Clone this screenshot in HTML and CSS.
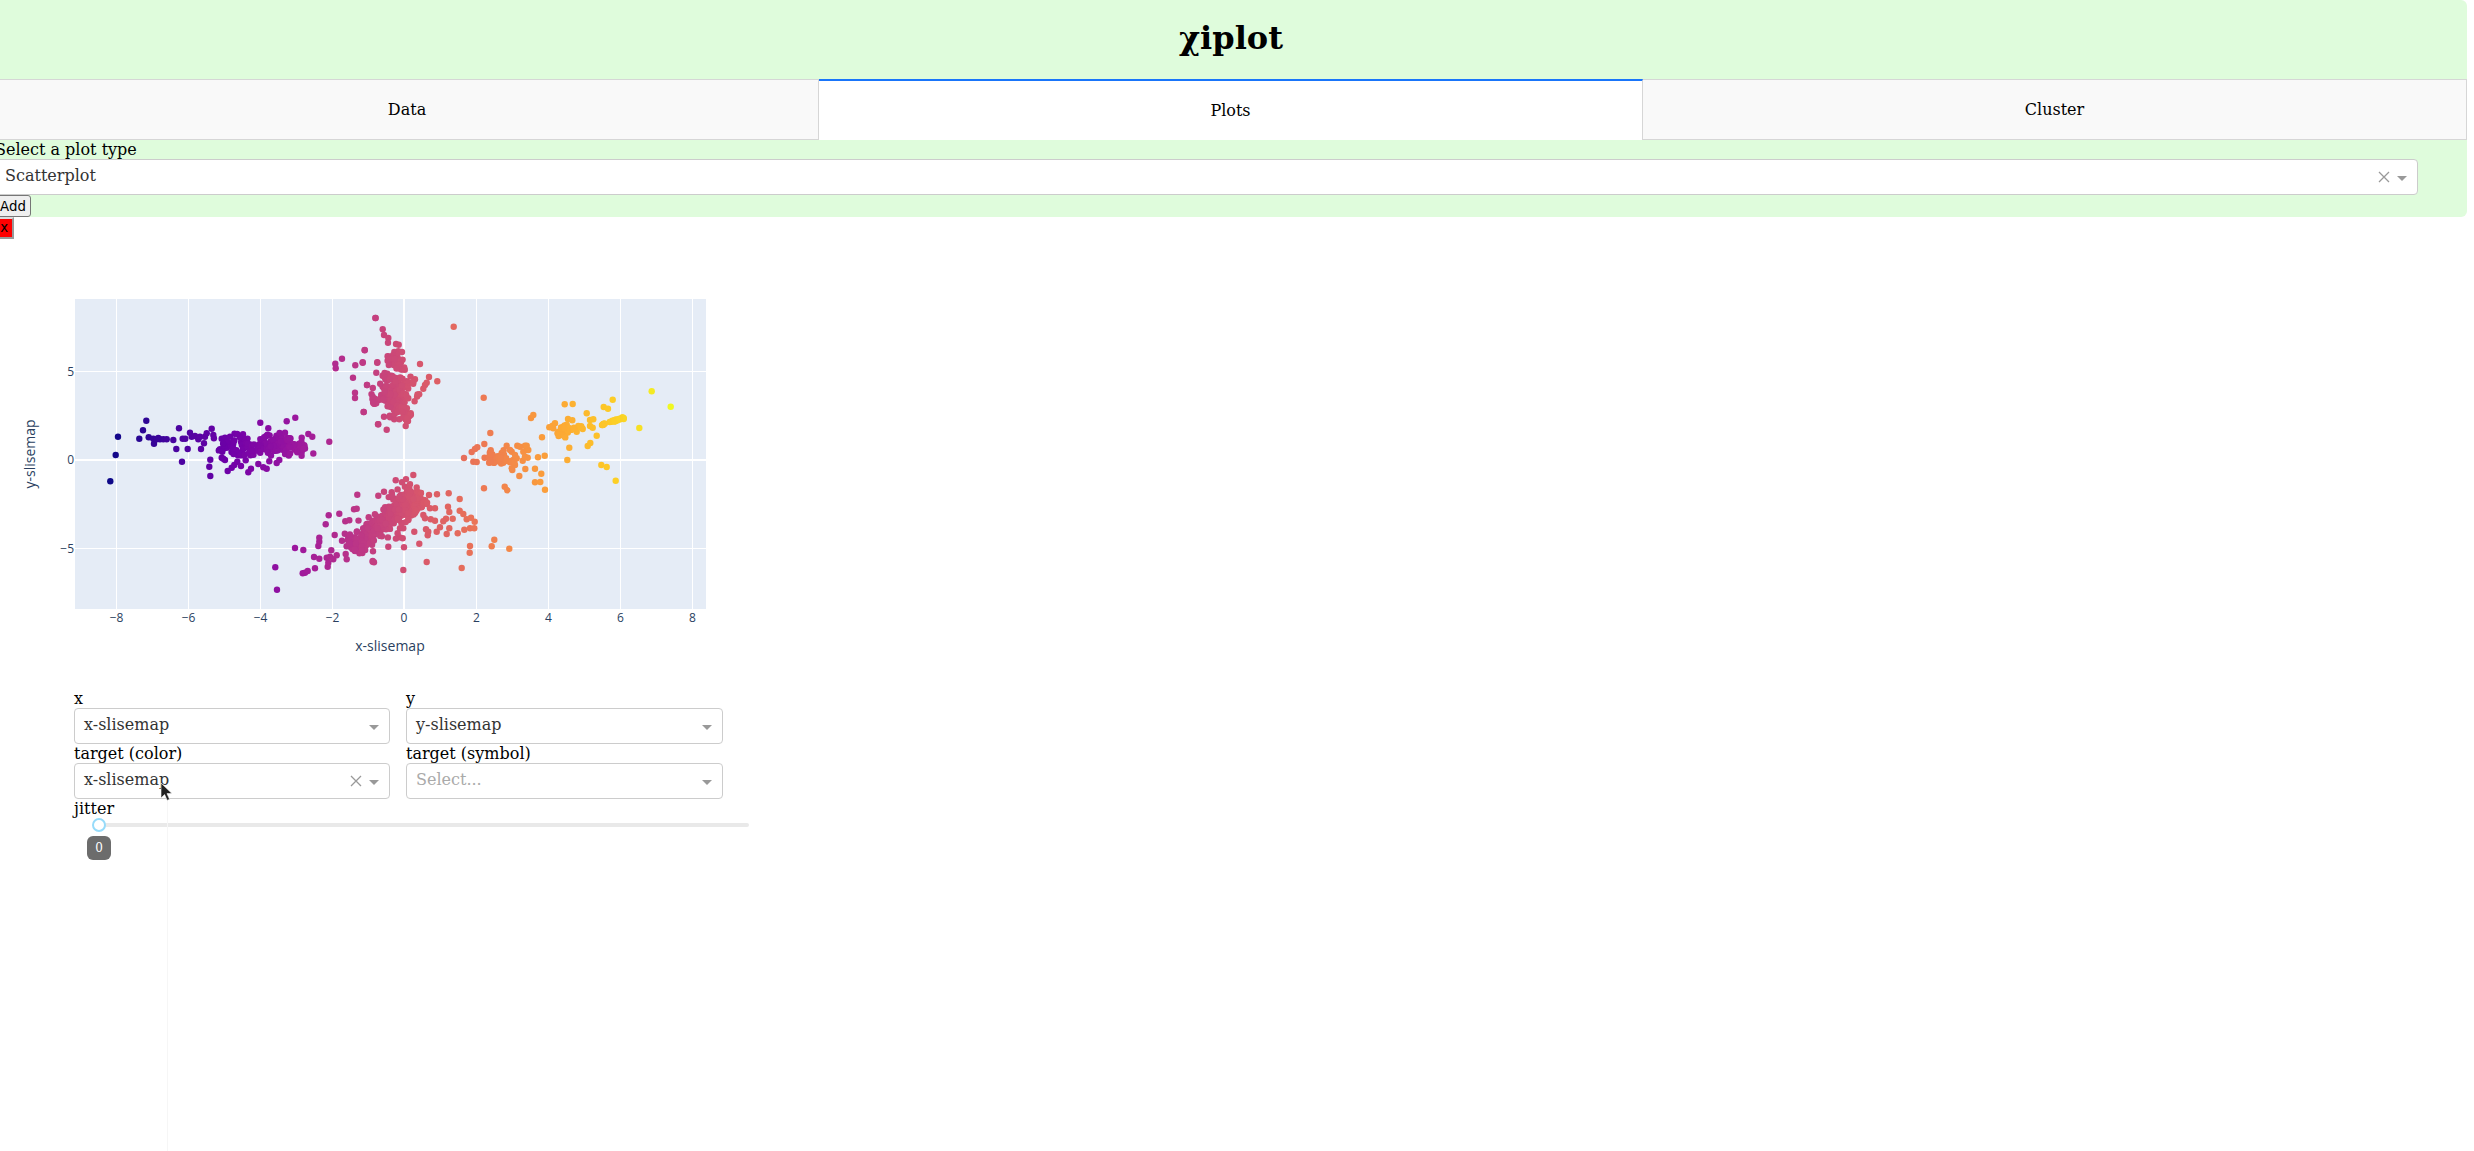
FILE: index.html
```html
<!DOCTYPE html>
<html lang="en">
<head>
<meta charset="utf-8">
<title>χiplot</title>
<link rel="stylesheet" href="styles.css">
</head>
<body>
<div class="app">
  <div class="panel">
    <header class="title-bar"><h1 class="title">χiplot</h1></header>
    <nav class="tabs">
      <div class="tab">Data</div>
      <div class="tab tab-active">Plots</div>
      <div class="tab">Cluster</div>
    </nav>
    <div class="plot-picker">
      <label class="field-label">Select a plot type</label>
      <div class="select select-wide">
        <span class="select-value">Scatterplot</span>
        <svg class="clear" width="12" height="12" viewBox="0 0 12 12"><path d="M1 1 L11 11 M11 1 L1 11"/></svg>
        <span class="caret"></span>
      </div>
      <button class="add-btn" type="button">Add</button>
    </div>
  </div>
  <button class="remove-btn" type="button">x</button>

  <svg class="chart" width="760" height="450" viewBox="0 239 760 450">
    <rect class="plot-bg" x="75" y="299" width="631" height="310"/>
    <g class="grid">
      <path d="M116.5 299V609M188.5 299V609M260.5 299V609M332.5 299V609M476.5 299V609M548.5 299V609M620.5 299V609M692.5 299V609M75 371.5H706M75 548.5H706"/>
      <path class="zero" d="M404 299V609M75 460H706"/>
    </g>
    <g id="points"></g>
    <g class="ticks ticks-x">
      <text x="116.5" y="622">−8</text><text x="188.5" y="622">−6</text><text x="260.5" y="622">−4</text><text x="332.5" y="622">−2</text><text x="404" y="622">0</text><text x="476.5" y="622">2</text><text x="548.5" y="622">4</text><text x="620.5" y="622">6</text><text x="692.5" y="622">8</text>
    </g>
    <g class="ticks ticks-y">
      <text x="74" y="376">5</text><text x="74" y="464">0</text><text x="74" y="553">−5</text>
    </g>
    <text class="axis-title" x="390" y="651">x-slisemap</text>
    <text class="axis-title" transform="translate(35 454) rotate(-90)">y-slisemap</text>
  </svg>

  <section class="controls">
    <div class="control-grid">
      <div class="control">
        <label class="field-label">x</label>
        <div class="select"><span class="select-value">x-slisemap</span><span class="caret"></span></div>
      </div>
      <div class="control">
        <label class="field-label">y</label>
        <div class="select"><span class="select-value">y-slisemap</span><span class="caret"></span></div>
      </div>
      <div class="control">
        <label class="field-label">target (color)</label>
        <div class="select">
          <span class="select-value">x-slisemap</span>
          <svg class="clear" width="12" height="12" viewBox="0 0 12 12"><path d="M1 1 L11 11 M11 1 L1 11"/></svg>
          <span class="caret"></span>
        </div>
      </div>
      <div class="control">
        <label class="field-label">target (symbol)</label>
        <div class="select"><span class="select-value placeholder">Select...</span><span class="caret"></span></div>
      </div>
    </div>
    <label class="field-label">jitter</label>
    <div class="slider">
      <div class="rail">
        <span class="handle"></span>
        <span class="bubble">0</span>
      </div>
    </div>
  </section>
</div>
<div class="guide-line"></div>
<svg class="pointer" width="16" height="22" viewBox="0 0 16 22"><path d="M1 1V16L4.6 12.6L7.2 18.4L9.6 17.3L7 11.6H12Z"/></svg>
<script src="plot.js"></script>
</body>
</html>
```
FILE: styles.css
```css
* { box-sizing: border-box; }
html, body { margin: 0; padding: 0; background: #fff; overflow: hidden; height: 100%; }
body { font-family: "DejaVu Serif", serif; font-size: 16px; color: #000; position: relative; }

.app { width: 2472px; margin-left: -5px; }
.panel { background: #dffcdc; border-radius: 6px; }

.title-bar { height: 79px; display: flex; align-items: center; justify-content: center; padding-bottom: 3px; }
.title { margin: 0; font-size: 32px; line-height: 37px; font-weight: 700; }

.tabs { display: grid; grid-template-columns: repeat(3, 1fr); height: 61px; }
.tab { background: #f9f9f9; border: 1px solid #d6d6d6; display: flex; align-items: center; justify-content: center; line-height: 19px; color: #000; }
.tab + .tab { border-left: 0; }
.tab-active { background: #fff; border-top: 2px solid #1975fa; border-bottom: 0; }

.field-label { display: block; line-height: 19px; height: 19px; white-space: nowrap; }

.plot-picker { display: block; }
.select { display: flex; align-items: center; height: 36px; background: #fff; border: 1px solid #ccc; border-radius: 4px; padding-left: 9px; padding-right: 10px; }
.select-wide { width: 98%; }
.select-value { flex: 1; color: #333; line-height: 32px; height: 34px; white-space: nowrap; }
.placeholder { color: #aaa; }
.caret { width: 0; height: 0; border-left: 5px solid transparent; border-right: 5px solid transparent; border-top: 5px solid #999; margin-top: 2px; }
.clear { margin-right: 7px; flex: none; }
.clear path { stroke: #999; stroke-width: 1.3; fill: none; }

.add-btn, .remove-btn { display: block; font-family: "DejaVu Sans", sans-serif; font-size: 13.33px; line-height: 16px; height: 22px; color: #000; }
.add-btn { width: 36px; padding: 2px 4px 0; background: #efefef; border: 1px solid #767676; border-radius: 3px; }
.remove-btn { width: 18.5px; padding: 0; text-align: center; background: #f00; border: 2px solid; border-color: #ddd #999 #999 #ddd; border-radius: 0; }

.chart { display: block; margin-left: 5px; }
.plot-bg { fill: #e5ecf6; }
.grid path { stroke: #fff; stroke-width: 1; fill: none; }
.grid .zero { stroke-width: 2; }
.ticks text { font-family: "Open Sans", sans-serif; font-size: 12px; fill: #2a3f5f; }
.ticks-x text { text-anchor: middle; }
.ticks-y text { text-anchor: end; }
.axis-title { font-family: "Open Sans", sans-serif; font-size: 14px; fill: #2a3f5f; text-anchor: middle; }

.controls { padding-left: 79px; width: 779px; }
.control-grid { display: grid; grid-template-columns: 316px 317px; column-gap: 16px; }

.slider { padding: 5px 25px 0; }
.rail { position: relative; height: 4px; background: #e9e9e9; border-radius: 4px; }
.handle { position: absolute; left: -7px; top: -5px; width: 14px; height: 14px; border: 2px solid #96dbfa; border-radius: 50%; background: #fff; }
.bubble { position: absolute; left: -12px; top: 13px; width: 24px; height: 24px; background: #6c6c6c; border-radius: 6px; color: #fff; font-size: 12px; line-height: 24px; text-align: center; }

.guide-line { position: absolute; left: 167px; top: 800px; width: 1px; height: 351px; background: #f6f6f6; }
.pointer { position: absolute; left: 160px; top: 782px; }
.pointer path { fill: #222; stroke: #fff; stroke-width: 0.6; }
```
FILE: plot.js
```js
(function () {
  // All positions are in a 3x plot coordinate system: page x = X / 3, page y = 280 + Y / 3
  var left = [[331,604],[347,525],[354,470],[418,476],[429,451],[439,422],[446,472],[462,491],[460,476],[470,478],[480,478],[490,478],[500,478],[475,474],[520,480],[529,507],[537,445],[546,545],[548,476],[556,476],[563,507],[570,458],[575,470],[585,468],[595,478],[603,507],[600,470],[612,490],[615,470],[620,460],[635,446],[640,465],[631,539],[628,560],[631,588],
    [665,476],[675,473],[660,508],[670,506],[680,503],[665,533],[675,540],[670,536],[683,573],[695,563],[703,555],[712,545],[723,558],[737,541],[745,577],[753,566],[775,552],[790,562],[800,566],[808,544],[830,549],[838,540],[781,428],[805,445],[860,424],[886,413],[905,473],[925,462],[937,470],[988,485],
    [826,862],[831,929],[885,804],[910,810],[908,880],[915,878],[923,873],[945,865],[942,831],[958,836],[983,860],[985,848],[980,833],[990,830],[1000,838],[1010,826],[994,811],[955,798],[958,785],[958,773],[1004,765],[977,733],[986,706],[1018,701],[1026,782],[1036,724],[1048,721],[1062,688],[1070,686],[1072,644],[1037,822],[1040,838],[1118,843],[1122,847],[1094,211],[1026,236],[1006,251],[1007,265],[1066,256],[1088,248],[1132,248],[1129,278],[1059,293],[1101,315],[1065,338],[1065,354],[1123,371],[1091,396],[1134,433],[1127,114]];

  var right = [[46,114],[68,148],[72,165],[85,174],[84,188],[108,192],[116,194],[115,214],[126,216],[14,210],[8,247],[52,247],[180,252],[207,291],[232,304],[21,315],[43,371],[11,396],[72,410],[55,433],[80,449],[118,418],[141,424],[137,438],[152,400],[195,315],[190,326],[200,308],[165,298],[281,140],
    [371,353],[391,459],[373,492],[312,534],[335,516],[345,507],[352,502],[340,545],[350,546],[372,625],[434,620],[442,631],[440,497],[472,497],[495,497],[505,510],[503,533],[488,542],[496,567],[478,588],[457,570],[525,566],[534,532],[554,527],[544,581],[525,607],[541,606],[555,629],[546,472],[513,414],[520,405],[622,540],[628,503],[683,498],[691,489],[710,467],[724,555],[740,561],[767,602],[838,444],[875,334],[932,380],[758,359],[731,381],[744,386],[680,400],[614,373],[638,372],[624,417],[637,421],[620,434],[568,442],[585,430],
    [455,515],[465,525],[460,540],[465,555],[480,500],[500,510],[490,515],[450,510],[470,535],[455,565],[495,530],[500,497],[690,420],[700,418],[690,438],[698,443],[668,447],[655,438],[650,455],
    [160,585],[107,601],[126,607],[72,635],[55,647],[95,637],[231,643],[266,640],[299,657],[207,645],[200,672],[172,680],[185,682],[210,685],[225,685],[264,680],[268,696],[299,692],[310,702],[320,718],[333,713],[344,725],[278,716],[258,716],[250,724],[240,742],[230,755],[198,748],[205,755],[203,766],[163,755],[118,772],[128,775],[85,800],[132,802],[178,791],[130,870],[200,846],[38,845],[305,864],[330,798],[329,818],[395,799],[403,779],[448,806],[293,760],[313,749],[330,745],[343,745],[260,762],[268,745],[190,705],[195,715],[212,718],[225,722],[145,720],[130,745],[120,745]];

  var seed = 20240611;
  function rand() {
    seed = (seed + 0x6d2b79f5) | 0;
    var t = Math.imul(seed ^ (seed >>> 15), 1 | seed);
    t = (t + Math.imul(t ^ (t >>> 7), 61 | t)) ^ t;
    return ((t ^ (t >>> 14)) >>> 0) / 4294967296;
  }
  function gauss() {
    return (rand() + rand() + rand() + rand() - 2) * 1.73;
  }

  var pts = left.slice();
  right.forEach(function (p) { pts.push([p[0] + 1080, p[1]]); });

  function blob(cx, cy, sx, sy, n) {
    for (var i = 0; i < n; i++) pts.push([cx + gauss() * sx, cy + gauss() * sy]);
  }
  function streak(x1, y1, x2, y2, sd, n) {
    var dx = x2 - x1, dy = y2 - y1, len = Math.sqrt(dx * dx + dy * dy);
    for (var i = 0; i < n; i++) {
      var u = rand(), o = gauss() * sd;
      pts.push([x1 + dx * u - dy / len * o, y1 + dy * u + dx / len * o]);
    }
  }

  // left horizontal cloud
  blob(725, 492, 34, 18, 45);
  blob(745, 520, 22, 8, 14);
  blob(800, 495, 24, 20, 30);
  blob(848, 495, 20, 14, 55);
  blob(900, 505, 16, 9, 20);
  // lower diagonal cloud
  streak(1050, 800, 1265, 640, 16, 220);
  streak(1050, 800, 1265, 640, 28, 50);
  streak(1110, 765, 1220, 675, 9, 70);
  blob(1225, 660, 28, 18, 35);
  blob(1060, 800, 12, 11, 20);
  // upper vertical cloud
  blob(1180, 345, 28, 26, 90);
  blob(1190, 375, 16, 18, 25);
  streak(1170, 220, 1210, 275, 10, 40);
  streak(1140, 290, 1240, 310, 9, 26);
  streak(1200, 380, 1222, 425, 7, 22);
  // orange cloud
  blob(1495, 536, 22, 10, 50);
  // amber cloud
  blob(1685, 458, 11, 7, 22);
  streak(1650, 442, 1750, 447, 5, 16);
  // yellow streak
  streak(1805, 434, 1875, 412, 1.5, 30);

  var stops = [[13,8,135],[70,3,159],[114,1,168],[156,23,158],[189,55,134],[216,87,107],[237,121,83],[251,159,58],[253,202,38],[240,249,33]];
  function plasma(t) {
    t = Math.max(0, Math.min(1, t)) * 9;
    var i = Math.min(8, Math.floor(t)), f = t - i, a = stops[i], b = stops[i + 1];
    return "rgb(" + [0, 1, 2].map(function (k) { return Math.round(a[k] + (b[k] - a[k]) * f); }).join(",") + ")";
  }

  var g = document.getElementById("points");
  var NS = "http://www.w3.org/2000/svg";
  pts.forEach(function (p) {
    var x = p[0] / 3, y = 280 + p[1] / 3;
    var c = document.createElementNS(NS, "circle");
    c.setAttribute("cx", x.toFixed(1));
    c.setAttribute("cy", y.toFixed(1));
    c.setAttribute("r", "3.2");
    c.setAttribute("fill", plasma(((x - 404) / 36 + 8.2) / 15.65));
    g.appendChild(c);
  });
})();
```
